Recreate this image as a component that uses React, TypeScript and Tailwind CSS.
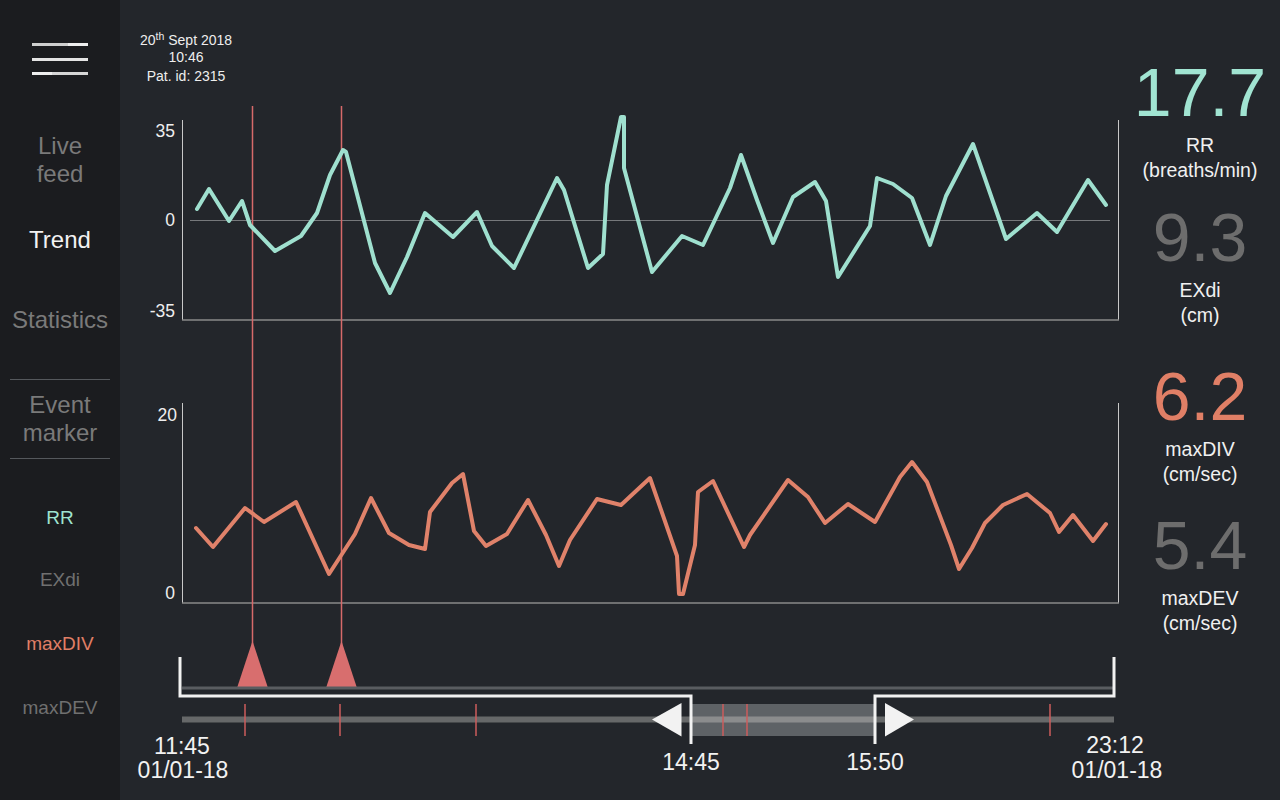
const teal =
  "197,209 209,189 229,221 242,201 250,225 275,251 301,236 317,213 330,175 343,150 346,152 375,263 390,293 407,257 425,213 453,237 477,212 492,246 514,268 557,178 564,190 588,268 603,254 607,185 621,117 624,117 624,168 652,272 682,236 703,245 730,188 741,155 757,200 773,243 793,197 815,182 826,201 838,277 870,226 877,178 893,184 912,198 930,245 946,196 973,144 1006,239 1037,213 1057,232 1088,180 1106,205";

const orange =
  "196,528 213,547 245,508 264,522 296,502 329,574 355,534 371,498 389,533 409,545 425,549 430,512 452,483 463,474 474,531 486,546 507,534 528,500 546,535 559,566 570,540 597,499 621,505 650,478 677,556 679,594 683,594 695,545 698,492 713,481 744,547 750,535 788,480 808,497 825,523 848,504 875,522 900,477 912,462 927,482 951,545 959,569 972,548 985,523 1003,505 1027,494 1050,513 1059,532 1073,515 1093,541 1106,524";

const eventLines = [252.5, 341.5];
const timelineTicks = [245, 340, 476, 723, 747, 1050];

function Sidebar() {
  return (
    <aside className="w-[120px] h-[800px] bg-[#1b1c1f] flex flex-col items-center shrink-0">
      {/* menu */}
      <div className="pt-[43px] flex flex-col w-[56px]">
        <div className="h-[3px] flex">
          <div className="w-[36px] bg-[#cfcfcf]" />
          <div className="flex-1 bg-[#eeeeee]" />
        </div>
        <div className="h-[3px] mt-[12px] bg-[#e4e4e4]" />
        <div className="h-[3px] mt-[11px] flex">
          <div className="w-[20px] bg-[#eeeeee]" />
          <div className="flex-1 bg-[#d6d6d6]" />
        </div>
      </div>

      <div className="mt-[57px] text-[24px] leading-[28px] text-center text-[#7a7a7a]">
        Live
        <br />
        feed
      </div>
      <div className="mt-[38px] text-[24px] leading-[28px] text-[#f2f2f2]">Trend</div>
      <div className="mt-[52px] text-[24px] leading-[28px] text-[#7a7a7a]">Statistics</div>

      <div className="mt-[45px] w-[100px] h-px bg-[#55585c]" />
      <div className="mt-[11px] text-[24px] leading-[28px] text-center text-[#7a7a7a]">
        Event
        <br />
        marker
      </div>
      <div className="mt-[11px] w-[100px] h-px bg-[#55585c]" />

      <div className="mt-[47px] text-[19px] leading-[24px] text-[#9fe3d0]">RR</div>
      <div className="mt-[38px] text-[19px] leading-[24px] text-[#707070]">EXdi</div>
      <div className="mt-[40px] text-[19px] leading-[24px] text-[#e07f66]">maxDIV</div>
      <div className="mt-[40px] text-[19px] leading-[24px] text-[#707070]">maxDEV</div>
    </aside>
  );
}

function Reading({ value, color, label, unit, className }: { value: string; color: string; label: string; unit: string; className: string }) {
  return (
    <div className={className + " flex flex-col items-center"}>
      <div className={"text-[68px] leading-[60px] " + color}>{value}</div>
      <div className="mt-[11px] text-[19.5px] leading-[25px] text-[#f0f0f0] text-center">
        {label}
        <br />
        {unit}
      </div>
    </div>
  );
}

function TrendChart() {
  return (
    <svg width={1000} height={700} viewBox="120 100 1000 700" className="block overflow-visible">
      {/* top chart frame */}
      <line x1={182.5} y1={120} x2={182.5} y2={320} stroke="#c8c8c8" strokeWidth={1} />
      <line x1={1118.5} y1={120} x2={1118.5} y2={320} stroke="#c8c8c8" strokeWidth={1} />
      <line x1={182} y1={320} x2={1119} y2={320} stroke="#8a8a8a" strokeWidth={1.5} />
      <line x1={190} y1={220.5} x2={1110} y2={220.5} stroke="#76787b" strokeWidth={1} />
      <g fill="#eeeeee" fontSize={17.5} textAnchor="end" dominantBaseline="central">
        <text x={175} y={131}>35</text>
        <text x={175} y={220}>0</text>
        <text x={175} y={311}>-35</text>
      </g>

      {/* bottom chart frame */}
      <line x1={182.5} y1={403} x2={182.5} y2={603} stroke="#c8c8c8" strokeWidth={1} />
      <line x1={1118.5} y1={403} x2={1118.5} y2={603} stroke="#c8c8c8" strokeWidth={1} />
      <line x1={182} y1={603} x2={1119} y2={603} stroke="#8a8a8a" strokeWidth={1.5} />
      <g fill="#eeeeee" fontSize={17.5} textAnchor="end" dominantBaseline="central">
        <text x={177} y={415}>20</text>
        <text x={175} y={593}>0</text>
      </g>

      {/* event markers */}
      {eventLines.map((x) => (
        <g key={x}>
          <line x1={x} y1={106} x2={x} y2={650} stroke="#d66a6a" strokeWidth={1.5} />
          <polygon points={`${x - 15.5},688 ${x},641 ${x + 15.5},688`} fill="#d86e6e" />
        </g>
      ))}

      <polyline points={teal} fill="none" stroke="#9fe0cf" strokeWidth={4} strokeLinejoin="round" strokeLinecap="round" />
      <polyline points={orange} fill="none" stroke="#e0826a" strokeWidth={4} strokeLinejoin="round" strokeLinecap="round" />

      {/* timeline */}
      <line x1={182} y1={688} x2={1114} y2={688} stroke="#595c60" strokeWidth={3} />
      <rect x={182} y={716.5} width={932} height={6} fill="#666869" />
      <rect x={691} y={704} width={184} height={32} fill="#5e6266" />
      <rect x={691} y={716.5} width={184} height={6} fill="#8b8c8d" />
      {timelineTicks.map((x) => (
        <line key={x} x1={x} y1={704} x2={x} y2={736} stroke="#cc5c5c" strokeWidth={1.5} />
      ))}

      <polyline points="180,657 180,696 691,696 691,744" fill="none" stroke="#f2f2f2" strokeWidth={3} />
      <polyline points="1114,657 1114,696 875,696 875,744" fill="none" stroke="#f2f2f2" strokeWidth={3} />
      <polygon points="652,719.5 681.5,703 681.5,736.5" fill="#f2f2f2" />
      <polygon points="914,719.5 885,703 885,736.5" fill="#f2f2f2" />

      <g fill="#f2f2f2" fontSize={23} textAnchor="middle" dominantBaseline="central">
        <text x={182} y={746}>11:45</text>
        <text x={183} y={770}>01/01-18</text>
        <text x={691} y={762}>14:45</text>
        <text x={875} y={762}>15:50</text>
        <text x={1115} y={745}>23:12</text>
        <text x={1117} y={770}>01/01-18</text>
      </g>
    </svg>
  );
}

export default function App() {
  return (
    <div className="flex w-[1280px] h-[800px] overflow-hidden font-['Liberation_Sans',Arial,sans-serif]">
      <Sidebar />
      <main className="flex-1 flex bg-[#23262b]">
        <div className="w-[1000px] flex flex-col relative z-10">
          <div className="h-[100px] pt-[32px] pl-[20px]">
            <div className="w-max text-center text-[14px] leading-[17px] text-[#eeeeee]">
              <div>
                20<sup>th</sup> Sept 2018
              </div>
              <div>10:46</div>
              <div className="mt-[2px]">Pat. id: 2315</div>
            </div>
          </div>
          <TrendChart />
        </div>

        <div className="w-[160px] flex flex-col items-center pt-[62px]">
          <Reading className="" value="17.7" color="text-[#a1e4d2]" label="RR" unit="(breaths/min)" />
          <Reading className="mt-[24px]" value="9.3" color="text-[#6d6d6d]" label="EXdi" unit="(cm)" />
          <Reading className="mt-[38px]" value="6.2" color="text-[#e07f66]" label="maxDIV" unit="(cm/sec)" />
          <Reading className="mt-[28px]" value="5.4" color="text-[#6d6d6d]" label="maxDEV" unit="(cm/sec)" />
        </div>
      </main>
    </div>
  );
}
